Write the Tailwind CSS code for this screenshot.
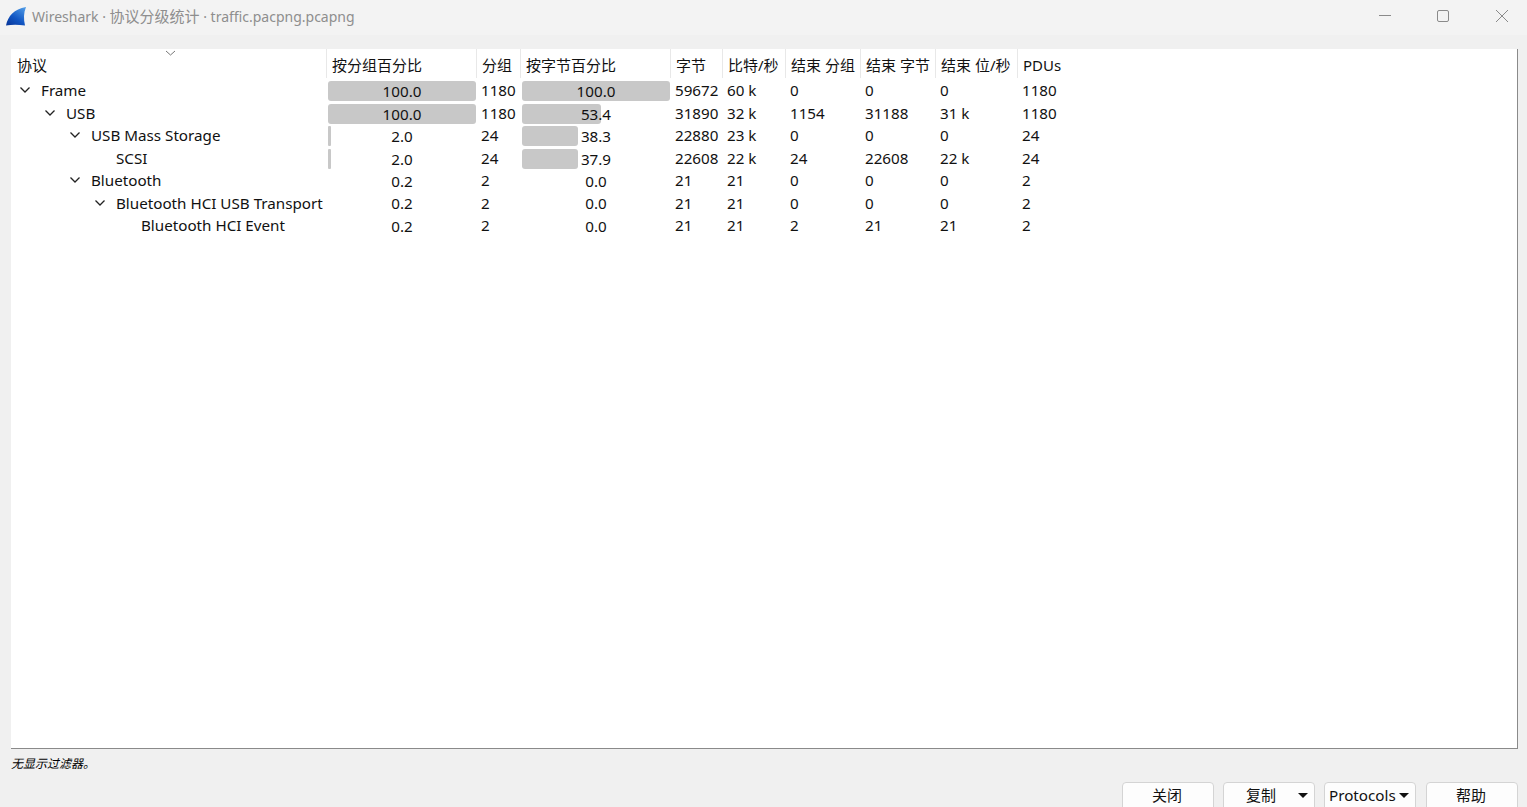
<!DOCTYPE html>
<html lang="zh-CN">
<head>
  <meta charset="UTF-8">
  <title>Wireshark · 协议分级统计 · traffic.pacpng.pcapng</title>
  <script src="https://cdn.jsdelivr.net/npm/@tailwindcss/browser@4"></script>
</head>
<body class="bg-[#f0f0f0] text-[#111] text-[15.2px] font-['Noto_Sans','Noto_Sans_CJK_SC',sans-serif]">
  <div class="h-[807px] flex flex-col overflow-hidden">

    <!-- title bar -->
    <div class="h-[35px] shrink-0 bg-[#f3f3f3] flex items-center">
      <svg class="ml-[6px] mt-[-1px] w-[20px] h-[20px]" viewBox="0 0 20 20">
        <defs>
          <linearGradient id="fin" x1="0.9" y1="0" x2="0.2" y2="1">
            <stop offset="0" stop-color="#4f9be6"/>
            <stop offset="0.6" stop-color="#1257c4"/>
            <stop offset="1" stop-color="#0a3a9e"/>
          </linearGradient>
        </defs>
        <path d="M0 18.500 C2 9 8 2 20 0 C17.500 6 17.500 12 19 18.500 C12 17.500 6 17.500 0 18.500 Z" fill="url(#fin)"/>
      </svg>
      <span class="ml-[6px] mt-[-3px] text-[14px] text-[#8e8e8e]">Wireshark · <span class="text-[15px]">协议分级统计</span> · traffic.pacpng.pcapng</span>
      <div class="ml-auto flex items-center">
        <svg class="w-[58px] h-[35px]" viewBox="0 0 58 35"><path d="M23 15.500 H35" stroke="#8a8a8a" stroke-width="1"/></svg>
        <svg class="w-[58px] h-[35px]" viewBox="0 0 58 35"><rect x="23.500" y="10.500" width="11" height="11" rx="1.500" fill="none" stroke="#8a8a8a" stroke-width="1"/></svg>
        <svg class="w-[58px] h-[35px] mr-[-3px]" viewBox="0 0 58 35"><path d="M24 10 L36 22 M36 10 L24 22" stroke="#8a8a8a" stroke-width="1"/></svg>
      </div>
    </div>

    <!-- protocol tree -->
    <div class="relative ml-[11px] mr-[9px] mt-[14px] h-[700px] shrink-0 bg-white border-r border-b border-[#8a8a8a] leading-[24px]">
      <svg class="absolute left-[154px] top-[1px] w-[11px] h-[6px]" viewBox="0 0 11 6"><path d="M1 1 L5.500 5 L10 1" fill="none" stroke="#777" stroke-width="1"/></svg>

      <div class="h-[29px] text-[15px] grid grid-cols-[316px_150px_44px_150px_52px_63px_75px_75px_82px_60px] items-center">
        <div class="h-full flex items-center pl-[6px] pt-[3px] border-r border-[#e8e8e8]">协议</div>
        <div class="h-full flex items-center pl-[5px] pt-[3px] border-r border-[#e8e8e8]">按分组百分比</div>
        <div class="h-full flex items-center pl-[5px] pt-[3px] border-r border-[#e8e8e8]">分组</div>
        <div class="h-full flex items-center pl-[5px] pt-[3px] border-r border-[#e8e8e8]">按字节百分比</div>
        <div class="h-full flex items-center pl-[5px] pt-[3px] border-r border-[#e8e8e8]">字节</div>
        <div class="h-full flex items-center pl-[5px] pt-[3px] border-r border-[#e8e8e8]">比特/秒</div>
        <div class="h-full flex items-center pl-[5px] pt-[3px] border-r border-[#e8e8e8]">结束 分组</div>
        <div class="h-full flex items-center pl-[5px] pt-[3px] border-r border-[#e8e8e8]">结束 字节</div>
        <div class="h-full flex items-center pl-[5px] pt-[3px] border-r border-[#e8e8e8]">结束 位/秒</div>
        <div class="h-full flex items-center pl-[5px] pt-[3px]">PDUs</div>
      </div>

      <!-- Frame -->
      <div class="h-[23px] grid grid-cols-[316px_150px_44px_150px_52px_63px_75px_75px_82px_60px] items-start">
        <div class="flex items-center pl-[8px]"><svg class="w-[12px] h-[8px] mr-[10px]" viewBox="0 0 12 8"><path d="M1.500 1.500 L6 6 L10.500 1.500" fill="none" stroke="#222" stroke-width="1.300"/></svg>Frame</div>
        <div class="relative h-full flex justify-center pt-[1px]"><div class="absolute left-[1px] top-[3px] h-[20px] w-[148px] rounded-[3px] bg-[#c8c8c8]"></div><span class="relative">100.0</span></div>
        <div class="pl-[4px]">1180</div>
        <div class="relative h-full flex justify-center pt-[1px]"><div class="absolute left-[1px] top-[3px] h-[20px] w-[148px] rounded-[3px] bg-[#c8c8c8]"></div><span class="relative">100.0</span></div>
        <div class="pl-[4px]">59672</div>
        <div class="pl-[4px]">60 k</div>
        <div class="pl-[4px]">0</div>
        <div class="pl-[4px]">0</div>
        <div class="pl-[4px]">0</div>
        <div class="pl-[4px]">1180</div>
      </div>

      <!-- USB -->
      <div class="h-[22px] grid grid-cols-[316px_150px_44px_150px_52px_63px_75px_75px_82px_60px] items-start">
        <div class="flex items-center pl-[33px]"><svg class="w-[12px] h-[8px] mr-[10px]" viewBox="0 0 12 8"><path d="M1.500 1.500 L6 6 L10.500 1.500" fill="none" stroke="#222" stroke-width="1.300"/></svg>USB</div>
        <div class="relative h-full flex justify-center pt-[1px]"><div class="absolute left-[1px] top-[3px] h-[20px] w-[148px] rounded-[3px] bg-[#c8c8c8]"></div><span class="relative">100.0</span></div>
        <div class="pl-[4px]">1180</div>
        <div class="relative h-full flex justify-center pt-[1px]"><div class="absolute left-[1px] top-[3px] h-[20px] w-[79px] rounded-[3px] bg-[#c8c8c8]"></div><span class="relative">53.4</span></div>
        <div class="pl-[4px]">31890</div>
        <div class="pl-[4px]">32 k</div>
        <div class="pl-[4px]">1154</div>
        <div class="pl-[4px]">31188</div>
        <div class="pl-[4px]">31 k</div>
        <div class="pl-[4px]">1180</div>
      </div>

      <!-- USB Mass Storage -->
      <div class="h-[23px] grid grid-cols-[316px_150px_44px_150px_52px_63px_75px_75px_82px_60px] items-start">
        <div class="flex items-center pl-[58px]"><svg class="w-[12px] h-[8px] mr-[10px]" viewBox="0 0 12 8"><path d="M1.500 1.500 L6 6 L10.500 1.500" fill="none" stroke="#222" stroke-width="1.300"/></svg>USB Mass Storage</div>
        <div class="relative h-full flex justify-center pt-[1px]"><div class="absolute left-[1px] top-[3px] h-[20px] w-[3px] rounded-[1px] bg-[#c8c8c8]"></div><span class="relative">2.0</span></div>
        <div class="pl-[4px]">24</div>
        <div class="relative h-full flex justify-center pt-[1px]"><div class="absolute left-[1px] top-[3px] h-[20px] w-[56px] rounded-[3px] bg-[#c8c8c8]"></div><span class="relative">38.3</span></div>
        <div class="pl-[4px]">22880</div>
        <div class="pl-[4px]">23 k</div>
        <div class="pl-[4px]">0</div>
        <div class="pl-[4px]">0</div>
        <div class="pl-[4px]">0</div>
        <div class="pl-[4px]">24</div>
      </div>

      <!-- SCSI -->
      <div class="h-[22px] grid grid-cols-[316px_150px_44px_150px_52px_63px_75px_75px_82px_60px] items-start">
        <div class="pl-[105px]">SCSI</div>
        <div class="relative h-full flex justify-center pt-[1px]"><div class="absolute left-[1px] top-[3px] h-[20px] w-[3px] rounded-[1px] bg-[#c8c8c8]"></div><span class="relative">2.0</span></div>
        <div class="pl-[4px]">24</div>
        <div class="relative h-full flex justify-center pt-[1px]"><div class="absolute left-[1px] top-[3px] h-[20px] w-[56px] rounded-[3px] bg-[#c8c8c8]"></div><span class="relative">37.9</span></div>
        <div class="pl-[4px]">22608</div>
        <div class="pl-[4px]">22 k</div>
        <div class="pl-[4px]">24</div>
        <div class="pl-[4px]">22608</div>
        <div class="pl-[4px]">22 k</div>
        <div class="pl-[4px]">24</div>
      </div>

      <!-- Bluetooth -->
      <div class="h-[23px] grid grid-cols-[316px_150px_44px_150px_52px_63px_75px_75px_82px_60px] items-start">
        <div class="flex items-center pl-[58px]"><svg class="w-[12px] h-[8px] mr-[10px]" viewBox="0 0 12 8"><path d="M1.500 1.500 L6 6 L10.500 1.500" fill="none" stroke="#222" stroke-width="1.300"/></svg>Bluetooth</div>
        <div class="text-center pt-[1px]">0.2</div>
        <div class="pl-[4px]">2</div>
        <div class="text-center pt-[1px]">0.0</div>
        <div class="pl-[4px]">21</div>
        <div class="pl-[4px]">21</div>
        <div class="pl-[4px]">0</div>
        <div class="pl-[4px]">0</div>
        <div class="pl-[4px]">0</div>
        <div class="pl-[4px]">2</div>
      </div>

      <!-- Bluetooth HCI USB Transport -->
      <div class="h-[22px] grid grid-cols-[316px_150px_44px_150px_52px_63px_75px_75px_82px_60px] items-start">
        <div class="flex items-center pl-[83px]"><svg class="w-[12px] h-[8px] mr-[10px]" viewBox="0 0 12 8"><path d="M1.500 1.500 L6 6 L10.500 1.500" fill="none" stroke="#222" stroke-width="1.300"/></svg>Bluetooth HCI USB Transport</div>
        <div class="text-center">0.2</div>
        <div class="pl-[4px]">2</div>
        <div class="text-center">0.0</div>
        <div class="pl-[4px]">21</div>
        <div class="pl-[4px]">21</div>
        <div class="pl-[4px]">0</div>
        <div class="pl-[4px]">0</div>
        <div class="pl-[4px]">0</div>
        <div class="pl-[4px]">2</div>
      </div>

      <!-- Bluetooth HCI Event -->
      <div class="h-[23px] grid grid-cols-[316px_150px_44px_150px_52px_63px_75px_75px_82px_60px] items-start">
        <div class="pl-[130px]">Bluetooth HCI Event</div>
        <div class="text-center pt-[1px]">0.2</div>
        <div class="pl-[4px]">2</div>
        <div class="text-center pt-[1px]">0.0</div>
        <div class="pl-[4px]">21</div>
        <div class="pl-[4px]">21</div>
        <div class="pl-[4px]">2</div>
        <div class="pl-[4px]">21</div>
        <div class="pl-[4px]">21</div>
        <div class="pl-[4px]">2</div>
      </div>
    </div>

    <!-- status -->
    <div class="ml-[11px] mt-[6px] h-[18px] flex items-center text-[12px] italic text-black">无显示过滤器。</div>

    <!-- buttons -->
    <div class="mt-[9px] mr-[9px] flex justify-end gap-[9px]">
      <button class="w-[92px] h-[32px] pb-[5px] pr-[2px] text-[15px] shrink-0 rounded-[4px] border border-[#d4d4d4] bg-[#fdfdfd]">关闭</button>
      <button class="relative w-[92px] h-[32px] pb-[5px] pr-[16px] text-[15px] shrink-0 rounded-[4px] border border-[#d4d4d4] bg-[#fdfdfd]">复制<span class="absolute right-[6px] top-[10px] border-x-[5px] border-t-[5px] border-x-transparent border-t-[#111]"></span></button>
      <button class="relative w-[92px] h-[32px] pb-[5px] pl-[4px] text-left shrink-0 rounded-[4px] border border-[#d4d4d4] bg-[#fdfdfd]">Protocols<span class="absolute right-[6px] top-[10px] border-x-[5px] border-t-[5px] border-x-transparent border-t-[#111]"></span></button>
      <button class="ml-[1px] w-[92px] h-[32px] pb-[5px] pr-[2px] text-[15px] shrink-0 rounded-[4px] border border-[#d4d4d4] bg-[#fdfdfd]">帮助</button>
    </div>
  </div>
</body>
</html>
